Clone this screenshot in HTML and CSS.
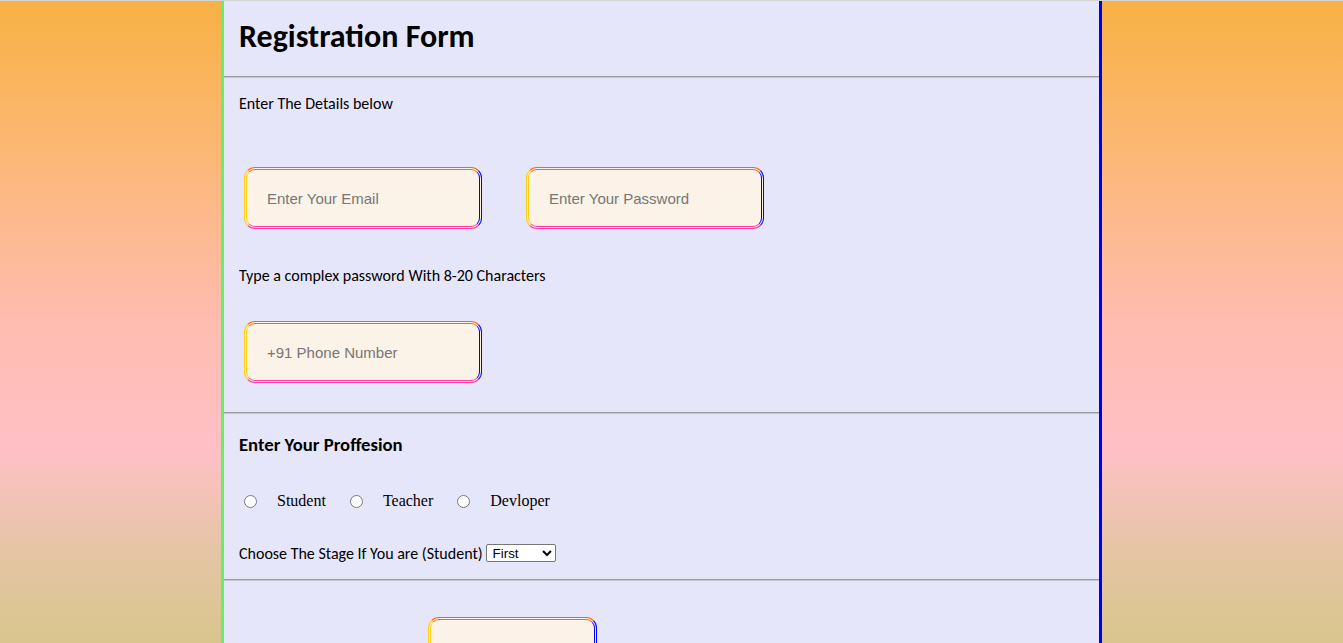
FILE: index.html
```html
<!DOCTYPE html>
<html lang="en">
<head>
<meta charset="utf-8">
<title>Registration Form</title>
<link rel="stylesheet" href="styles.css">
</head>
<body>
<main class="form">
  <header class="head">
    <h1 class="title">Registration Form</h1>
  </header>
  <hr class="rule">
  <section class="sec sec-details">
    <p class="note">Enter The Details below</p>
    <div class="row row-first">
      <input class="field" type="email" placeholder="Enter Your Email">
      <input class="field" type="password" placeholder="Enter Your Password">
    </div>
    <p class="note note-pass">Type a complex password With 8-20 Characters</p>
    <div class="row row-phone">
      <input class="field" type="tel" placeholder="+91 Phone Number">
    </div>
  </section>
  <hr class="rule">
  <section class="sec sec-prof">
    <h3 class="subtitle">Enter Your Proffesion</h3>
    <div class="radios">
      <label class="opt"><input type="radio" name="prof" class="radio"><span class="opt-text">Student</span></label>
      <label class="opt"><input type="radio" name="prof" class="radio"><span class="opt-text">Teacher</span></label>
      <label class="opt"><input type="radio" name="prof" class="radio"><span class="opt-text">Devloper</span></label>
    </div>
    <div class="stage">
      <span class="stage-text">Choose The Stage If You are (Student)</span>
      <select class="stage-select">
        <option>First</option>
        <option>Second</option>
        <option>Third</option>
        <option>Fourth</option>
      </select>
    </div>
  </section>
  <hr class="rule">
  <section class="sec sec-submit">
    <button class="submit" type="submit">Submit</button>
  </section>
</main>
</body>
</html>
```

FILE: styles.css
```css
html {
  margin: 0;
  min-height: 100%;
  background: linear-gradient(180deg, #f8b144 0%, #fcb878 25%, #ffbcb0 50%, #ffc0c6 70%, #e6c5a6 85%, #d9c58d 100%);
  background-attachment: fixed;
}

body {
  margin: 0;
  border-top: 1px solid #d4d4d4;
  font-family: Carlito, Calibri, Lato, "Open Sans", sans-serif;
  font-size: 16px;
  color: #000;
}

.form {
  width: 875px;
  margin-left: 221px;
  background: #e6e6fa;
  border-left: 3px solid #63f064;
  border-right: 3px solid #0000ee;
  min-height: 760px;
}

.head {
  padding: 16px 15px 20px;
}

.title {
  margin: 0;
  font-size: 32px;
  line-height: 39px;
  font-weight: 700;
}

.rule {
  margin: 0;
  height: 0;
  border: 0;
  border-top: 1px solid #9c9c9c;
  border-bottom: 1px solid #c4c4cc;
}

.sec {
  padding: 0 15px;
}

.sec-details {
  padding-top: 16px;
  padding-bottom: 29px;
}

.note {
  margin: 0;
  font-size: 16px;
  line-height: 20px;
}

.row {
  display: flex;
  gap: 44px;
  padding-left: 5px;
}

.row-first {
  margin-top: 53px;
}

.note-pass {
  margin-top: 37px;
}

.row-phone {
  margin-top: 35px;
}

.field {
  box-sizing: border-box;
  width: 238px;
  height: 62px;
  margin: 0;
  padding: 0 20px;
  border: 3px double;
  border-color: #ff6414 #0000ff #ff3ca0 #ffcc1a;
  border-radius: 11px;
  background: #fbf2e8;
  font-family: "Liberation Sans", Arial, sans-serif;
  font-size: 15px;
  color: #333;
  outline: none;
}

.field::placeholder {
  color: #767676;
}

.sec-prof {
  padding-top: 20px;
  padding-bottom: 16px;
}

.subtitle {
  margin: 0;
  font-size: 18.72px;
  line-height: 22px;
  font-weight: 700;
}

.radios {
  display: flex;
  margin-top: 35px;
  height: 20px;
  align-items: center;
}

.opt {
  display: flex;
  align-items: center;
  margin-right: 19px;
  font-family: "Liberation Serif", "Times New Roman", serif;
  font-size: 16px;
}

.radio {
  width: 13px;
  height: 13px;
  margin: 0 20px 0 5px;
}

.stage {
  display: flex;
  align-items: center;
  gap: 3px;
  margin-top: 32px;
  height: 20px;
  font-size: 16px;
}

.stage-select {
  width: 70px;
  height: 18px;
  font-family: "Liberation Sans", Arial, sans-serif;
  font-size: 13.33px;
  background: #fff;
  border: 1px solid #767676;
  border-radius: 2px;
  padding: 0 0 0 2px;
}

.sec-submit {
  padding-top: 36px;
}

.submit {
  box-sizing: border-box;
  width: 169px;
  height: 100px;
  margin-left: 189px;
  padding-top: 50px;
  border: 3px double;
  border-color: #ff6414 #0000ff #ff3ca0 #ffcc1a;
  border-radius: 11px;
  background: #fbf2e8;
  font-family: Carlito, Calibri, Lato, sans-serif;
  font-size: 16px;
}
```
